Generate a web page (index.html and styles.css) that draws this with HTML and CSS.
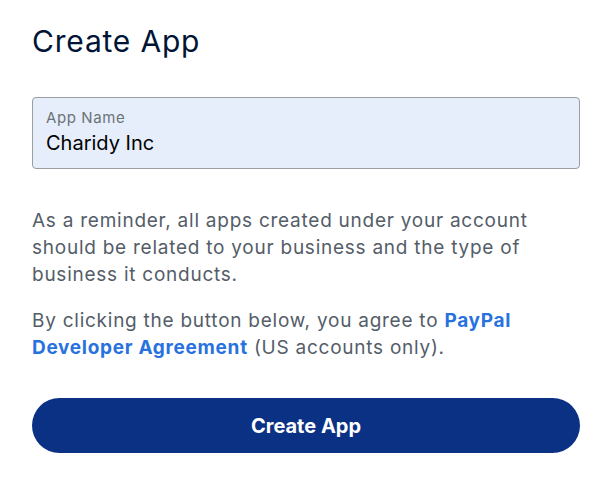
FILE: index.html
```html
<!DOCTYPE html>
<html lang="en">
<head>
    <meta charset="UTF-8">
    <meta name="viewport" content="width=device-width, initial-scale=1.0">
    <title>Create App</title>
    <link rel="stylesheet" href="styles.css">
</head>
<body>
<div class="create-app">
    <h1>Create App</h1>

    <div class="field">
        <label for="appName">App Name</label>
        <input type="text" id="appName" name="appName" value="Charidy Inc">
    </div>

    <p class="note">As a reminder, all apps created under your account should be related to your business and the type of business it conducts.</p>

    <p class="note">By clicking the button below, you agree to <a href="#">PayPal Developer Agreement</a> (US accounts only).</p>

    <button type="submit" class="submit-btn">Create App</button>
</div>
</body>
</html>
```

FILE: styles.css
```css
:root {
    --title-color: #001435;
    --text-color: #545d68;
    --link-color: #2872e0;
    --button-color: #0b3185;
}

* {
    box-sizing: border-box;
}

body {
    margin: 0;
    font-family: Inter, 'Noto Sans', sans-serif;
    background: white;
}

.create-app {
    padding: 22px 34px 0 32px;
}

h1 {
    margin: 0 0 37px;
    font-size: 30px;
    font-weight: 400;
    line-height: 38px;
    color: var(--title-color);
    letter-spacing: 0.8px;
}

.field {
    display: flex;
    flex-direction: column;
    height: 72px;
    padding: 10px 13px 0;
    background: #e5eefa;
    border: 1px solid #9a9ea3;
    border-radius: 4px;
    margin-bottom: 38px;
}

.field label {
    font-size: 15px;
    line-height: 19px;
    letter-spacing: 0.6px;
    color: #6c7378;
}

.field input {
    border: none;
    background: transparent;
    padding: 0;
    margin-top: 3px;
    font-family: inherit;
    font-size: 20px;
    line-height: 26px;
    color: #000;
    outline: none;
}

.note {
    margin: 0 0 19px;
    font-size: 19px;
    line-height: 27px;
    letter-spacing: 0.75px;
    color: var(--text-color);
}

.note a {
    color: var(--link-color);
    font-weight: 700;
    letter-spacing: 0.7px;
    text-decoration: none;
}

.submit-btn {
    display: block;
    width: 100%;
    height: 55px;
    margin-top: 37px;
    border: none;
    border-radius: 28px;
    background: var(--button-color);
    color: white;
    font-family: inherit;
    font-size: 20px;
    font-weight: 700;
    cursor: pointer;
}
```
